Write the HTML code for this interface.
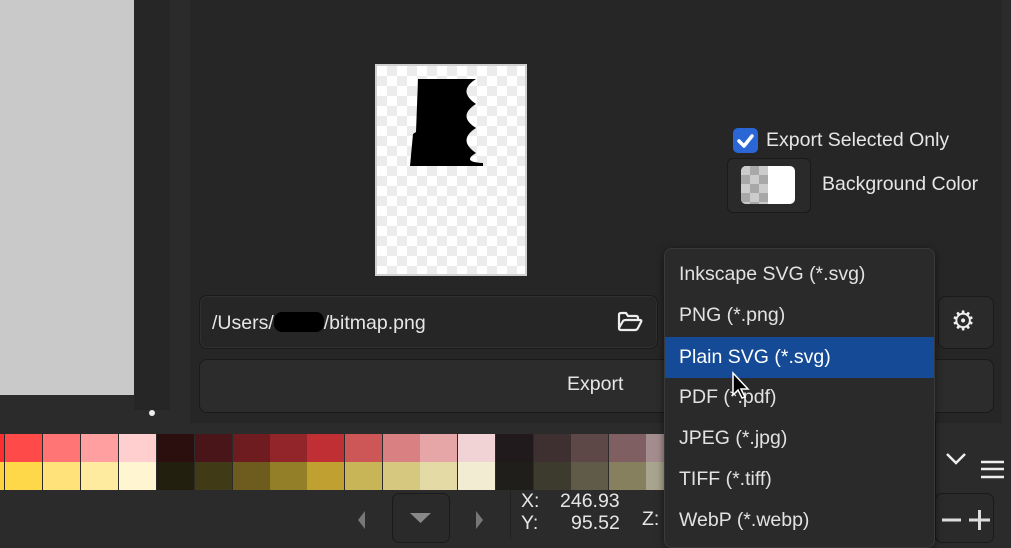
<!DOCTYPE html>
<html><head><meta charset="utf-8"><style>
*{box-sizing:border-box;margin:0;padding:0}
body{width:1011px;height:540px;overflow:hidden;background:#2b2b2b;font-family:"Liberation Sans",sans-serif;color:#e6e6e6;position:relative}
.a{position:absolute}
.t{position:absolute;font-size:19.5px;white-space:nowrap;line-height:1}
.sw{position:absolute;width:38px;height:28px;border-right:1px solid #2b2b2b}
.it{position:absolute;left:0;width:270px;height:41px;padding-left:14px;font-size:19.5px;line-height:41px;color:#e2e2e2}
</style></head><body>
<div class="a" style="left:0;top:0;width:134px;height:395px;background:#c9c9c9"></div>
<div class="a" style="left:134px;top:0;width:36px;height:410px;background:#262626"></div>
<div class="a" style="left:149px;top:410px;width:6px;height:6px;border-radius:50%;background:#eee"></div>
<div class="a" style="left:190px;top:0;width:812px;height:423px;background:#262626"></div>

<!-- preview -->
<div class="a" style="left:375px;top:64px;width:152px;height:212px;background:#fff;border:2px solid #d0d0d0;background-image:linear-gradient(45deg,#ececec 25%,transparent 25%,transparent 75%,#ececec 75%),linear-gradient(45deg,#ececec 25%,transparent 25%,transparent 75%,#ececec 75%);background-size:20px 20px;background-position:0 0,10px 10px"></div>
<svg class="a" style="left:375px;top:64px" width="152" height="212"><path d="M43 15 L101 15 Q82 27 101 40 Q82 52 101 64 Q82 76 101 89 Q86 98 108 99 L108 102 L35 102 L38 70 L41 68 Z" fill="#000"/></svg>

<!-- checkbox -->
<div class="a" style="left:733px;top:128px;width:25px;height:25px;border-radius:5px;background:#2a66d6"></div>
<svg class="a" style="left:733px;top:128px" width="25" height="25"><path d="M6 13 L11 18 L19 8" stroke="#fff" stroke-width="3.5" fill="none" stroke-linecap="round" stroke-linejoin="round"/></svg>
<div class="t" style="left:766px;top:131px">Export Selected Only</div>
<div class="a" style="left:727px;top:158px;width:84px;height:55px;border-radius:6px;background:#2a2a2a;border:1px solid #1a1a1a"></div>
<div class="a" style="left:741px;top:166px;width:54px;height:38px;border-radius:5px;overflow:hidden;background:#fff">
<div style="width:27px;height:38px;background:#ccc;background-image:linear-gradient(45deg,#a8a8a8 25%,transparent 25%,transparent 75%,#a8a8a8 75%),linear-gradient(45deg,#a8a8a8 25%,transparent 25%,transparent 75%,#a8a8a8 75%);background-size:18px 18px;background-position:0 0,9px 9px"></div></div>
<div class="t" style="left:822px;top:175px">Background Color</div>

<!-- path field -->
<div class="a" style="left:199px;top:295px;width:459px;height:54px;border-radius:8px;background:#262626;border:1px solid #1a1a1a;box-shadow:inset 0 0 0 1px #303030"></div>
<div class="t" style="left:212px;top:312px">/Users/<span style="display:inline-block;width:50px;height:20px;background:#000;border-radius:8px;vertical-align:-3px"></span>/bitmap.png</div>
<svg class="a" style="left:616px;top:310px" width="28" height="24"><path d="M3 18 V5 Q3 3 5 3 H10 L12 6 H20 Q22 6 22 8 V10 M3 18 L7 11 Q8 10 10 10 H24 Q26 10 25 12 L22 18 Q21 20 19 20 H5 Q3 20 3 18" stroke="#eee" stroke-width="2.2" fill="none" stroke-linejoin="round"/></svg>
<div class="a" style="left:938px;top:296px;width:56px;height:53px;border-radius:8px;background:#2a2a2a;border:1px solid #1a1a1a"></div>
<div class="t" style="left:951px;top:308px;font-size:27px;color:#eee">⚙</div>
<div class="a" style="left:199px;top:359px;width:795px;height:54px;border-radius:8px;background:#2c2c2c;border:1px solid #1a1a1a"></div>
<div class="t" style="left:567px;top:375px">Export</div>

<!-- palette -->
<div class="a" style="left:0;top:434px;width:1011px;height:56px">
<div class="sw" style="left:-33px;top:0;background:#ff2e2e"></div><div class="sw" style="left:5px;top:0;background:#ff4a4a"></div><div class="sw" style="left:43px;top:0;background:#ff7575"></div><div class="sw" style="left:81px;top:0;background:#ff9f9f"></div><div class="sw" style="left:119px;top:0;background:#ffcfcf"></div><div class="sw" style="left:157px;top:0;background:#2b0e0e"></div><div class="sw" style="left:195px;top:0;background:#4a1518"></div><div class="sw" style="left:233px;top:0;background:#6e1c20"></div><div class="sw" style="left:270px;top:0;background:#92252a"></div><div class="sw" style="left:307px;top:0;background:#c02f33"></div><div class="sw" style="left:345px;top:0;background:#cd5656"></div><div class="sw" style="left:383px;top:0;background:#d98082"></div><div class="sw" style="left:420px;top:0;background:#e6a6a8"></div><div class="sw" style="left:458px;top:0;background:#f2d3d5"></div><div class="sw" style="left:496px;top:0;background:#211a1c"></div><div class="sw" style="left:534px;top:0;background:#3e2f30"></div><div class="sw" style="left:571px;top:0;background:#5e4747"></div><div class="sw" style="left:609px;top:0;background:#7f5f61"></div><div class="sw" style="left:646px;top:0;background:#a48d8e"></div>
<div class="sw" style="left:-33px;top:28px;background:#ffd040"></div><div class="sw" style="left:5px;top:28px;background:#ffd84a"></div><div class="sw" style="left:43px;top:28px;background:#ffe27a"></div><div class="sw" style="left:81px;top:28px;background:#ffeba0"></div><div class="sw" style="left:119px;top:28px;background:#fff5d0"></div><div class="sw" style="left:157px;top:28px;background:#231f0e"></div><div class="sw" style="left:195px;top:28px;background:#403a16"></div><div class="sw" style="left:233px;top:28px;background:#6d5c1e"></div><div class="sw" style="left:270px;top:28px;background:#937f28"></div><div class="sw" style="left:307px;top:28px;background:#bfa030"></div><div class="sw" style="left:345px;top:28px;background:#c8b558"></div><div class="sw" style="left:383px;top:28px;background:#d7c87f"></div><div class="sw" style="left:420px;top:28px;background:#e4daa6"></div><div class="sw" style="left:458px;top:28px;background:#f1ecd2"></div><div class="sw" style="left:496px;top:28px;background:#1f1e1a"></div><div class="sw" style="left:534px;top:28px;background:#3d3a2e"></div><div class="sw" style="left:571px;top:28px;background:#5f5b48"></div><div class="sw" style="left:609px;top:28px;background:#86805f"></div><div class="sw" style="left:646px;top:28px;background:#a8a48d"></div>
</div>

<!-- bottom bar -->
<svg class="a" style="left:355px;top:508px" width="140" height="24"><path d="M3 12 L10 3 V21 Z" fill="#777"/><path d="M121 3 L128 12 L121 21 Z" fill="#777"/></svg>
<div class="a" style="left:392px;top:493px;width:58px;height:50px;border-radius:7px;border:1px solid #1a1a1a;background:#2a2a2a"></div>
<svg class="a" style="left:410px;top:513px" width="22" height="12"><path d="M0 0 H21 L10.5 10 Z" fill="#888"/></svg>
<div class="a" style="left:510px;top:490px;width:1px;height:50px;background:#222"></div>
<div class="t" style="left:521px;top:492px">X:</div><div class="t" style="left:560px;top:492px">246.93</div>
<div class="t" style="left:521px;top:514px">Y:</div><div class="t" style="left:571px;top:514px">95.52</div>
<div class="t" style="left:642px;top:510px">Z:</div>
<div class="a" style="left:934px;top:420px;width:2px;height:120px;background:#1a1a1a"></div>
<svg class="a" style="left:945px;top:452px" width="60" height="30"><path d="M2 2 L11 11 L20 2" stroke="#eee" stroke-width="2.5" fill="none"/><path d="M36 10 H59 M36 17 H59 M36 25 H59" stroke="#eee" stroke-width="2.5"/></svg>
<div class="a" style="left:935px;top:493px;width:59px;height:50px;border-radius:7px;background:#2a2a2a;border:1px solid #1a1a1a"></div>
<svg class="a" style="left:940px;top:508px" width="52" height="24"><path d="M2 12 H21 M29 12 H50 M39.5 2 V22" stroke="#ddd" stroke-width="3"/></svg>

<!-- dropdown -->
<div class="a" style="left:664px;top:248px;width:271px;height:300px;border-radius:8px;background:#2a2a2a;border:1px solid #3a3a3a;box-shadow:0 2px 8px rgba(0,0,0,.5);overflow:hidden">
<div class="it" style="top:5px">Inkscape SVG (*.svg)</div>
<div class="it" style="top:46px">PNG (*.png)</div>
<div class="it" style="top:88px;background:#154a96;color:#fff">Plain SVG (*.svg)</div>
<div class="it" style="top:128px">PDF (*.pdf)</div>
<div class="it" style="top:169px">JPEG (*.jpg)</div>
<div class="it" style="top:210px">TIFF (*.tiff)</div>
<div class="it" style="top:251px">WebP (*.webp)</div>
</div>
<svg class="a" style="left:731px;top:371px" width="22" height="30"><path d="M2 2 V24 L7 19 L11 27 L14 26 L10 18 L17 18 Z" fill="#000" stroke="#fff" stroke-width="1.5"/></svg>
</body></html>
